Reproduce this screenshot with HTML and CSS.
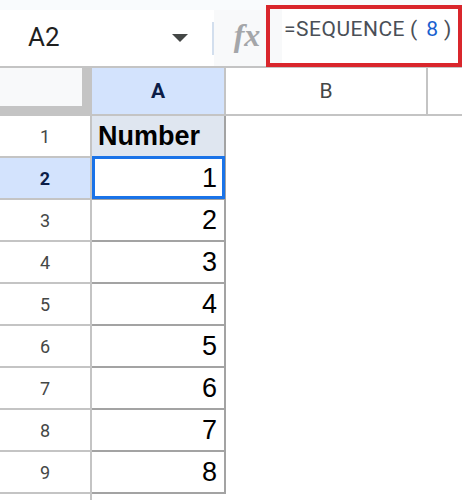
FILE: index.html
```html
<!DOCTYPE html>
<html>
<head>
<meta charset="utf-8">
<link rel="stylesheet" href="styles.css">
</head>
<body>
<div class="sheet">
  <div class="toolbar">
    <div class="namebox">
      <span class="ref">A2</span>
      <span class="caret"></span>
      <span class="nb-divider"></span>
    </div>
    <div class="fx">fx</div>
    <div class="formula">
      <div class="formula-gutter"></div>
      <div class="formula-text"><span class="fn">=SEQUENCE</span><span class="paren lp">(</span><span class="arg">8</span><span class="paren rp">)</span></div>
    </div>
  </div>
  <div class="grid">
    <div class="row head">
      <div class="corner"><div class="corner-in"></div></div>
      <div class="ch col-a sel">A</div>
      <div class="ch col-b">B</div>
      <div class="ch col-c"></div>
    </div>
    <div class="row"><div class="rh">1</div><div class="cell title">Number</div><div class="rest"></div></div>
    <div class="row"><div class="rh sel">2</div><div class="cell num active">1</div><div class="rest"></div></div>
    <div class="row"><div class="rh">3</div><div class="cell num">2</div><div class="rest"></div></div>
    <div class="row"><div class="rh">4</div><div class="cell num">3</div><div class="rest"></div></div>
    <div class="row"><div class="rh">5</div><div class="cell num">4</div><div class="rest"></div></div>
    <div class="row"><div class="rh">6</div><div class="cell num">5</div><div class="rest"></div></div>
    <div class="row"><div class="rh">7</div><div class="cell num">6</div><div class="rest"></div></div>
    <div class="row"><div class="rh">8</div><div class="cell num">7</div><div class="rest"></div></div>
    <div class="row"><div class="rh">9</div><div class="cell num">8</div><div class="rest"></div></div>
    <div class="row"><div class="rh"></div><div class="cell empty"></div><div class="rest"></div></div>
  </div>
</div>
</body>
</html>
```
FILE: styles.css
```css
html, body {
  margin: 0;
  padding: 0;
  background: #ffffff;
}
body {
  width: 462px;
  height: 500px;
  overflow: hidden;
  font-family: Roboto, "Liberation Sans", Arial, sans-serif;
}
.sheet {
  width: 462px;
}

/* toolbar */
.toolbar {
  display: flex;
  height: 66px;
  background: #f9fbfd;
}
.namebox {
  margin-top: 10px;
  width: 214px;
  box-sizing: border-box;
  padding-left: 28px;
  background: #ffffff;
  display: flex;
  align-items: center;
}
.ref {
  font-family: Roboto, "Liberation Sans", sans-serif;
  font-size: 26px;
  line-height: 26px;
  color: #1f1f1f;
  padding-bottom: 3px;
}
.caret {
  margin-left: auto;
  margin-right: 24px;
  width: 0;
  height: 0;
  border-left: 8px solid transparent;
  border-right: 8px solid transparent;
  border-top: 8px solid #444746;
  margin-top: -1px;
}
.nb-divider {
  width: 2px;
  height: 33px;
  background: #d3dfee;
}
.fx {
  width: 52px;
  margin-top: 10px;
  background: #f8f9fa;
  display: flex;
  justify-content: center;
  align-items: center;
  font-family: "Liberation Serif", serif;
  font-style: italic;
  font-weight: bold;
  font-size: 32px;
  color: #a4a6a9;
  padding-left: 14px;
  padding-bottom: 6px;
  box-sizing: border-box;
}
.formula {
  flex: 1;
  margin-top: 5px;
  margin-bottom: -1px;
  border: 4px solid #d9262c;
  background: #ffffff;
  display: flex;
  position: relative;
  z-index: 2;
}
.formula-gutter {
  width: 12px;
  background: #f8f9fa;
}
.formula-text {
  padding-left: 2px;
  padding-top: 8px;
  font-family: Roboto, "Liberation Sans", sans-serif;
  font-size: 21px;
  line-height: 24px;
  color: #4a4f57;
  white-space: nowrap;
}
.fn {
  letter-spacing: 0.5px;
}
.paren {
  color: #4a4f57;
}
.lp {
  margin-left: 5px;
  margin-right: 9px;
}
.arg {
  color: #1a5fcf;
}
.rp {
  margin-left: 6px;
}

/* grid */
.row {
  display: flex;
  height: 42px;
}
.row.head {
  height: 46px;
  border-top: 2px solid #c4c4c4;
  border-bottom: 2px solid #c4c4c4;
}
.corner {
  width: 92px;
  background: #c4c4c4;
}
.corner-in {
  width: 82px;
  height: 38px;
  background: #f8f9fa;
}
.ch {
  display: flex;
  align-items: center;
  justify-content: center;
  font-family: Roboto, "Liberation Sans", sans-serif;
  font-size: 21px;
  color: #444746;
}
.col-a {
  width: 132px;
  border-right: 2px solid #c4c4c4;
}
.col-b {
  width: 200px;
  border-right: 2px solid #c4c4c4;
}
.col-c {
  flex: 1;
}
.ch.sel {
  background: #d3e3fd;
  color: #0b1d48;
  font-weight: bold;
}
.rh {
  width: 90px;
  height: 40px;
  border-right: 2px solid #c4c4c4;
  border-bottom: 2px solid #c4c4c4;
  display: flex;
  align-items: center;
  justify-content: center;
  font-family: Roboto, "Liberation Sans", sans-serif;
  font-size: 18px;
  color: #444746;
}
.rh.sel {
  background: #d3e3fd;
  color: #0b1d48;
  font-weight: bold;
}
.cell {
  width: 132px;
  height: 40px;
  box-sizing: content-box;
  border-right: 2px solid #a3a3a3;
  border-bottom: 2px solid #a3a3a3;
  display: flex;
  align-items: flex-end;
  font-family: "Liberation Sans", Arial, sans-serif;
  font-size: 27px;
  line-height: 27px;
  color: #000000;
}
.title {
  background: #dfe6f0;
  font-weight: bold;
  padding-left: 6px;
  width: 126px;
  height: 34px;
  padding-bottom: 6px;
}
.num {
  justify-content: flex-end;
  padding-right: 7px;
  width: 125px;
  height: 34px;
  padding-bottom: 6px;
}
.cell.empty {
  border: none;
}
.active {
  position: relative;
}
.active::after {
  content: "";
  position: absolute;
  top: -2px;
  left: 0;
  right: -1px;
  bottom: -1px;
  border: 3px solid #1a73e8;
}
.rest {
  flex: 1;
}
```
